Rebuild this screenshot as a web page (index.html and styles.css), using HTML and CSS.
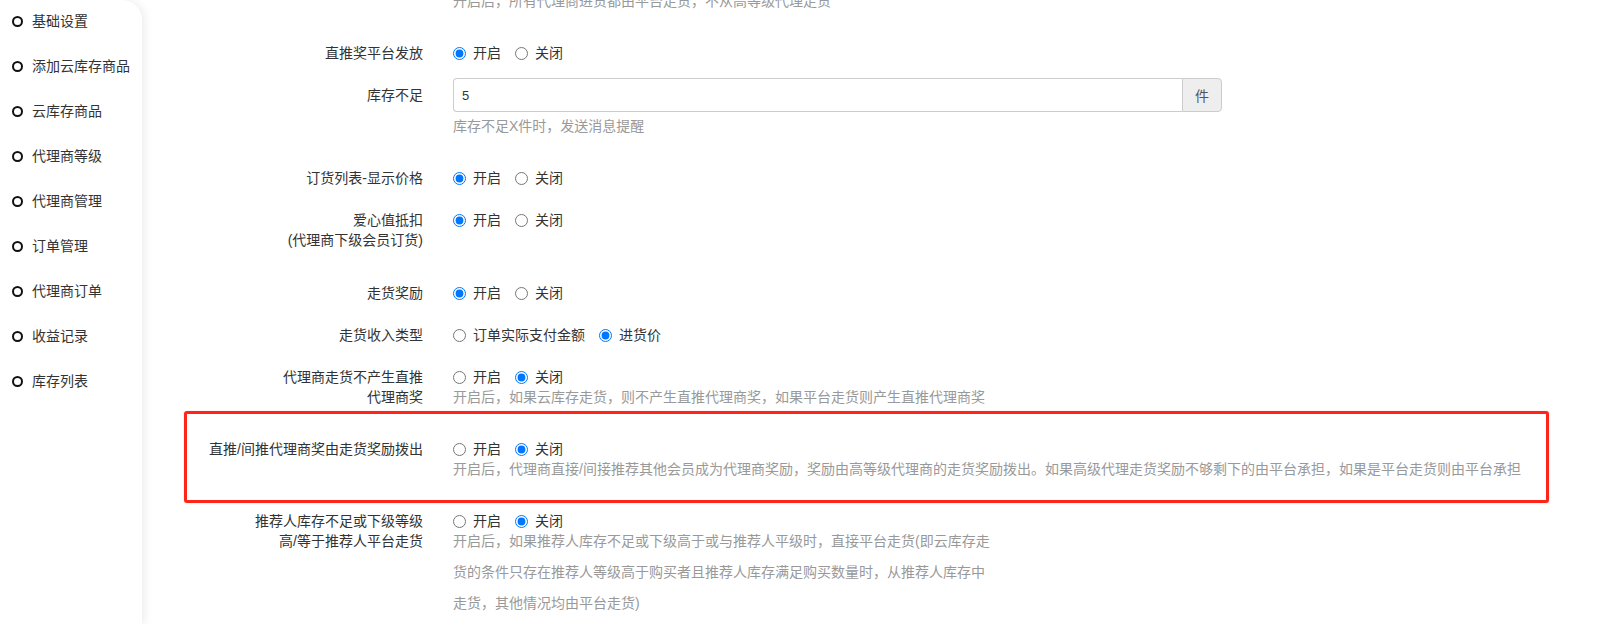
FILE: index.html
```html
<!DOCTYPE html>
<html lang="zh-CN">
<head>
    <meta charset="UTF-8">
    <meta name="viewport" content="width=device-width, initial-scale=1.0">
    <title>云库存设置</title>
    <link rel="stylesheet" href="styles.css">
</head>
<body>
    <!-- 左侧菜单 -->
    <aside class="sidebar">
        <ul class="menu">
            <li class="menu-item">基础设置</li>
            <li class="menu-item">添加云库存商品</li>
            <li class="menu-item">云库存商品</li>
            <li class="menu-item">代理商等级</li>
            <li class="menu-item">代理商管理</li>
            <li class="menu-item">订单管理</li>
            <li class="menu-item">代理商订单</li>
            <li class="menu-item">收益记录</li>
            <li class="menu-item">库存列表</li>
        </ul>
    </aside>

    <main class="main">
        <form class="settings">
            <div class="form-row first">
                <div class="form-label"></div>
                <div class="form-field">
                    <p class="help">开启后，所有代理商进货都由平台走货，不从高等级代理走货</p>
                </div>
            </div>

            <div class="form-row">
                <div class="form-label">直推奖平台发放</div>
                <div class="form-field">
                    <div class="radios">
                        <label class="radio"><input type="radio" name="direct_platform" checked>开启</label>
                        <label class="radio"><input type="radio" name="direct_platform">关闭</label>
                    </div>
                </div>
            </div>

            <div class="form-row">
                <div class="form-label">库存不足</div>
                <div class="form-field">
                    <div class="input-group">
                        <input type="text" value="5">
                        <span class="addon">件</span>
                    </div>
                    <p class="help">库存不足X件时，发送消息提醒</p>
                </div>
            </div>

            <div class="form-row">
                <div class="form-label">订货列表-显示价格</div>
                <div class="form-field">
                    <div class="radios">
                        <label class="radio"><input type="radio" name="show_price" checked>开启</label>
                        <label class="radio"><input type="radio" name="show_price">关闭</label>
                    </div>
                </div>
            </div>

            <div class="form-row tall">
                <div class="form-label">爱心值抵扣<br>(代理商下级会员订货)</div>
                <div class="form-field">
                    <div class="radios">
                        <label class="radio"><input type="radio" name="love_deduct" checked>开启</label>
                        <label class="radio"><input type="radio" name="love_deduct">关闭</label>
                    </div>
                </div>
            </div>

            <div class="form-row">
                <div class="form-label">走货奖励</div>
                <div class="form-field">
                    <div class="radios">
                        <label class="radio"><input type="radio" name="ship_reward" checked>开启</label>
                        <label class="radio"><input type="radio" name="ship_reward">关闭</label>
                    </div>
                </div>
            </div>

            <div class="form-row">
                <div class="form-label">走货收入类型</div>
                <div class="form-field">
                    <div class="radios">
                        <label class="radio"><input type="radio" name="income_type">订单实际支付金额</label>
                        <label class="radio"><input type="radio" name="income_type" checked>进货价</label>
                    </div>
                </div>
            </div>

            <div class="form-row">
                <div class="form-label">代理商走货不产生直推<br>代理商奖</div>
                <div class="form-field">
                    <div class="radios">
                        <label class="radio"><input type="radio" name="no_direct">开启</label>
                        <label class="radio"><input type="radio" name="no_direct" checked>关闭</label>
                    </div>
                    <p class="help">开启后，如果云库存走货，则不产生直推代理商奖，如果平台走货则产生直推代理商奖</p>
                </div>
            </div>

            <div class="form-row marked">
                <div class="form-label">直推/间推代理商奖由走货奖励拨出</div>
                <div class="form-field">
                    <div class="radios">
                        <label class="radio"><input type="radio" name="from_ship">开启</label>
                        <label class="radio"><input type="radio" name="from_ship" checked>关闭</label>
                    </div>
                    <p class="help">开启后，代理商直接/间接推荐其他会员成为代理商奖励，奖励由高等级代理商的走货奖励拨出。如果高级代理走货奖励不够剩下的由平台承担，如果是平台走货则由平台承担</p>
                </div>
                <div class="mark-box"></div>
            </div>

            <div class="form-row">
                <div class="form-label">推荐人库存不足或下级等级<br>高/等于推荐人平台走货</div>
                <div class="form-field">
                    <div class="radios">
                        <label class="radio"><input type="radio" name="referrer_platform">开启</label>
                        <label class="radio"><input type="radio" name="referrer_platform" checked>关闭</label>
                    </div>
                    <p class="help loose">开启后，如果推荐人库存不足或下级高于或与推荐人平级时，直接平台走货(即云库存走货的条件只存在推荐人等级高于购买者且推荐人库存满足购买数量时，从推荐人库存中走货，其他情况均由平台走货)</p>
                </div>
            </div>
        </form>
    </main>
</body>
</html>
```

FILE: styles.css
```css
html, body {
    height: 100%;
    overflow: hidden;
}

body {
    margin: 0;
    display: flex;
    background: #fff;
    font-family: "Liberation Sans", "Noto Sans CJK SC", sans-serif;
    font-size: 14px;
    color: #333;
}

/* 左侧菜单 */
.sidebar {
    width: 142px;
    flex-shrink: 0;
    background: #fff;
    border-top-right-radius: 20px;
    box-shadow: 3px 0 8px rgba(0, 0, 0, 0.07);
}

.menu {
    list-style: none;
    margin: 0;
    padding: 11px 0 0 12px;
}

.menu-item {
    display: flex;
    align-items: center;
    line-height: 20px;
    margin-bottom: 25px;
    color: #333;
    white-space: nowrap;
}

.menu-item::before {
    content: "";
    width: 7px;
    height: 7px;
    border: 2px solid #111;
    border-radius: 50%;
    margin-right: 9px;
}

/* 表单 */
.main {
    flex: 1;
    padding-left: 11px;
}

.settings {
    margin: 0;
}

.form-row {
    display: flex;
    margin-bottom: 15px;
}

.form-row.first {
    margin-top: -9px;
}

.form-row.tall {
    margin-bottom: 26px;
}

.form-row.marked {
    position: relative;
}

.form-label {
    width: 270px;
    flex-shrink: 0;
    padding: 7px 30px 0 0;
    text-align: right;
    line-height: 20px;
    color: #333;
}

.form-row.first .form-label {
    padding-top: 0;
}

.form-field {
    flex: 1;
}

.radios {
    display: flex;
    padding-top: 7px;
    line-height: 20px;
}

.radio {
    display: inline-flex;
    align-items: center;
    margin-right: 14px;
    color: #333;
}

.radio input {
    width: 13px;
    height: 13px;
    margin: 0 7px 0 0;
}

.input-group {
    display: flex;
    width: 769px;
    height: 34px;
}

.input-group input {
    flex: 1;
    height: 34px;
    box-sizing: border-box;
    padding: 0 8px;
    border: 1px solid #ccc;
    border-right: none;
    border-radius: 4px 0 0 4px;
    font-family: inherit;
    font-size: 13px;
    color: #333;
    outline: none;
}

.addon {
    width: 40px;
    box-sizing: border-box;
    display: flex;
    align-items: center;
    justify-content: center;
    border: 1px solid #ccc;
    border-radius: 0 4px 4px 0;
    background: #eee;
    color: #555;
}

.help {
    margin: 0 0 10px;
    line-height: 20px;
    color: #999;
}

.input-group + .help {
    margin-top: 4px;
}

.help.loose {
    width: 540px;
    line-height: 31px;
    margin-top: -5px;
}

/* 标注框 */
.mark-box {
    position: absolute;
    top: -21px;
    bottom: -14px;
    left: 31px;
    right: 73px;
    border: 3px solid #ff2419;
    border-radius: 3px;
    box-shadow: 0 0 1px rgba(255, 60, 50, 0.6);
    pointer-events: none;
}
```
